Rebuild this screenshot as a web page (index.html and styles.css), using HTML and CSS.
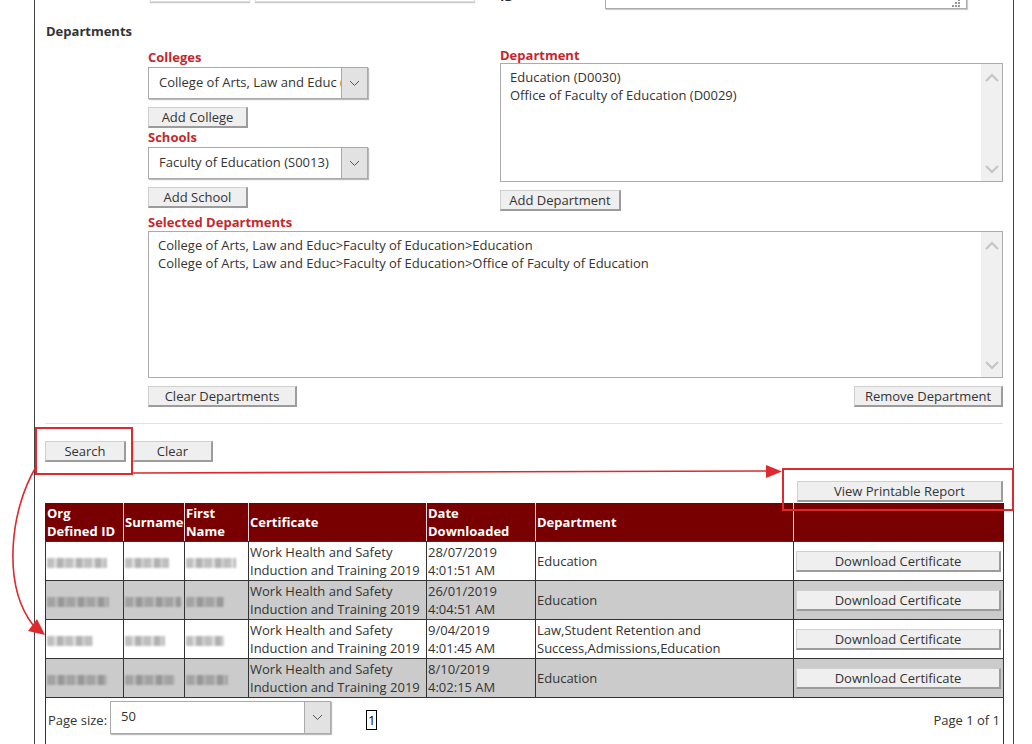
FILE: index.html
```html
<!DOCTYPE html>
<html>
<head>
  <title>Certificate Downloads</title>
  <meta charset="utf-8">
  <link rel="stylesheet" href="styles.css">
</head>
<body>
  <div class="panel">
    <!-- filter row above the departments, scrolled up out of view -->
    <div class="prev-row">
      <span class="stub stub-first"></span>
      <span class="stub stub-last"></span>
      <span class="stub-label">ID</span>
      <span class="stub-area">
        <svg class="grip" width="10" height="8" viewBox="0 0 10 8">
          <rect x="7" y="0" width="2" height="2" fill="#999"/>
          <rect x="4" y="3" width="2" height="2" fill="#999"/>
          <rect x="7" y="3" width="2" height="2" fill="#999"/>
          <rect x="1" y="6" width="2" height="2" fill="#999"/>
          <rect x="4" y="6" width="2" height="2" fill="#999"/>
          <rect x="7" y="6" width="2" height="2" fill="#999"/>
        </svg>
      </span>
    </div>

    <div class="form-label">Departments</div>

    <div class="dept">
      <div class="dept-grid">
        <div class="dept-left">
          <div class="field-label label-colleges">Colleges</div>
          <div class="select">
            <span class="select-value">College of Arts, Law and Educ (C0005)</span>
            <span class="select-arrow">
              <svg width="11" height="7" viewBox="0 0 11 7"><path d="M1 1 L5.5 5.5 L10 1" fill="none" stroke="#555" stroke-width="1"/></svg>
            </span>
          </div>
          <button class="btn btn-add">Add College</button>

          <div class="field-label label-schools">Schools</div>
          <div class="select select-school">
            <span class="select-value">Faculty of Education (S0013)</span>
            <span class="select-arrow">
              <svg width="11" height="7" viewBox="0 0 11 7"><path d="M1 1 L5.5 5.5 L10 1" fill="none" stroke="#555" stroke-width="1"/></svg>
            </span>
          </div>
          <button class="btn btn-add">Add School</button>
        </div>

        <div class="dept-right">
          <div class="field-label">Department</div>
          <div class="listbox listbox-dept">
            <div class="listbox-items">
              <div>Education (D0030)</div>
              <div>Office of Faculty of Education (D0029)</div>
            </div>
            <div class="scrollbar">
              <svg width="14" height="9" viewBox="0 0 14 9"><path d="M1 8 L7 2 L13 8" fill="none" stroke="#c4c4c4" stroke-width="2"/></svg>
              <svg width="14" height="9" viewBox="0 0 14 9"><path d="M1 1 L7 7 L13 1" fill="none" stroke="#c4c4c4" stroke-width="2"/></svg>
            </div>
          </div>
          <button class="btn btn-add-dept">Add Department</button>
        </div>
      </div>

      <div class="field-label label-selected">Selected Departments</div>
      <div class="listbox listbox-selected">
        <div class="listbox-items">
          <div>College of Arts, Law and Educ&gt;Faculty of Education&gt;Education</div>
          <div>College of Arts, Law and Educ&gt;Faculty of Education&gt;Office of Faculty of Education</div>
        </div>
        <div class="scrollbar">
          <svg width="14" height="9" viewBox="0 0 14 9"><path d="M1 8 L7 2 L13 8" fill="none" stroke="#c4c4c4" stroke-width="2"/></svg>
          <svg width="14" height="9" viewBox="0 0 14 9"><path d="M1 1 L7 7 L13 1" fill="none" stroke="#c4c4c4" stroke-width="2"/></svg>
        </div>
      </div>
      <div class="dept-actions">
        <button class="btn btn-wide">Clear Departments</button>
        <button class="btn btn-wide">Remove Department</button>
      </div>
    </div>

    <hr class="divider">

    <div class="search-actions">
      <button class="btn btn-search">Search</button>
      <button class="btn btn-clear">Clear</button>
    </div>

    <div class="report-row">
      <button class="btn btn-report">View Printable Report</button>
    </div>

    <table class="results">
      <colgroup>
        <col class="c-id"><col class="c-surname"><col class="c-first"><col class="c-cert">
        <col class="c-date"><col class="c-dept"><col class="c-action">
      </colgroup>
      <thead>
        <tr>
          <th>Org Defined ID</th>
          <th class="nowrap">Surname</th>
          <th>First Name</th>
          <th>Certificate</th>
          <th>Date Downloaded</th>
          <th>Department</th>
          <th></th>
        </tr>
      </thead>
      <tbody>
        <tr>
          <td><span class="redact w60"></span></td>
          <td><span class="redact w44"></span></td>
          <td><span class="redact w50"></span></td>
          <td>Work Health and Safety Induction and Training 2019</td>
          <td>28/07/2019<br>4:01:51 AM</td>
          <td>Education</td>
          <td><button class="btn btn-download">Download Certificate</button></td>
        </tr>
        <tr class="alt">
          <td><span class="redact w62"></span></td>
          <td><span class="redact w56"></span></td>
          <td><span class="redact w38"></span></td>
          <td>Work Health and Safety Induction and Training 2019</td>
          <td>26/01/2019<br>4:04:51 AM</td>
          <td>Education</td>
          <td><button class="btn btn-download">Download Certificate</button></td>
        </tr>
        <tr>
          <td><span class="redact w46"></span></td>
          <td><span class="redact w40"></span></td>
          <td><span class="redact w38"></span></td>
          <td>Work Health and Safety Induction and Training 2019</td>
          <td>9/04/2019<br>4:01:45 AM</td>
          <td>Law,Student Retention and Success,Admissions,Education</td>
          <td><button class="btn btn-download">Download Certificate</button></td>
        </tr>
        <tr class="alt">
          <td><span class="redact w60"></span></td>
          <td><span class="redact w50"></span></td>
          <td><span class="redact w42"></span></td>
          <td>Work Health and Safety Induction and Training 2019</td>
          <td>8/10/2019<br>4:02:15 AM</td>
          <td>Education</td>
          <td><button class="btn btn-download">Download Certificate</button></td>
        </tr>
      </tbody>
      <tfoot>
        <tr>
          <td colspan="7">
            <div class="pager">
              <span class="pager-label">Page size:</span>
              <div class="select select-size">
                <span class="select-value">50</span>
                <span class="select-arrow">
                  <svg width="11" height="7" viewBox="0 0 11 7"><path d="M1 1 L5.5 5.5 L10 1" fill="none" stroke="#555" stroke-width="1"/></svg>
                </span>
              </div>
              <span class="page-num">1</span>
              <span class="page-count">Page 1 of 1</span>
            </div>
          </td>
        </tr>
      </tfoot>
    </table>
  </div>

  <!-- red callouts drawn over the form -->
  <svg class="callouts" width="1032" height="744" viewBox="0 0 1032 744">
    <rect x="36" y="428" width="96" height="46" fill="none" stroke="#dc2a2e" stroke-width="2"/>
    <rect x="783" y="469" width="230" height="41" fill="none" stroke="#dc2a2e" stroke-width="2"/>
    <path d="M133 473 L768 471" fill="none" stroke="#dc2a2e" stroke-width="1.6"/>
    <polygon points="766,465 782,471.5 766,478" fill="#dc2a2e"/>
    <path d="M36 467 C 10 510, 2 585, 33 625" fill="none" stroke="#dc2a2e" stroke-width="1.6"/>
    <polygon points="28,631 37,619 45,635" fill="#dc2a2e"/>
  </svg>
</body>
</html>
```

FILE: styles.css
```css
body {
  margin: 0;
  font-family: "Open Sans", "Liberation Sans", sans-serif;
  font-size: 13px;
  line-height: 18px;
  color: #333;
  background: #fff;
  position: relative;
  height: 744px;
  overflow: hidden;
}
.panel {
  margin-left: 34px;
  width: 958px;
  padding: 0 10px;
  border-left: 1px solid #444;
  border-right: 1px solid #444;
  min-height: 744px;
}

/* row above, only its bottom edge shows */
.prev-row {
  display: flex;
  align-items: flex-end;
  height: 10px;
}
.stub {
  height: 24px;
  margin-bottom: 8px;
  border: 1px solid #ddd;
  box-shadow: 0 1px 1px #c8c8c8;
  box-sizing: border-box;
}
.stub-first {
  margin-left: 105px;
  width: 100px;
}
.stub-last {
  margin-left: 5px;
  width: 220px;
}
.stub-label {
  margin-left: 25px;
  width: 105px;
  margin-bottom: 5px;
  font-weight: bold;
}
.stub-area {
  position: relative;
  width: 362px;
  height: 40px;
  margin-bottom: 1px;
  border: 1px solid #aaa;
  box-shadow: 1px 1px 1px #ccc;
  box-sizing: border-box;
}
.grip {
  position: absolute;
  right: 5px;
  bottom: 1px;
}

.form-label {
  margin-top: 12px;
  padding-left: 1px;
  font-weight: bold;
}
.field-label {
  color: #c4282c;
  font-weight: bold;
  line-height: 16px;
}

.dept {
  margin-top: 7px;
  padding-left: 103px;
}
.dept-grid {
  display: grid;
  grid-template-columns: 352px 503px;
}
.label-colleges {
  padding-top: 2px;
  line-height: 17px;
}
.label-schools {
  margin-top: 1px;
}
.label-selected {
  margin-top: 3px;
}

.select {
  display: flex;
  width: 220px;
  height: 32px;
  margin-top: 1px;
  border: 1px solid #aaa;
  box-shadow: 1px 1px 1px #bbb;
  box-sizing: border-box;
  background: #fff;
}
.select-school {
  margin-top: 2px;
}
.select-value {
  flex: 1;
  overflow: hidden;
  white-space: nowrap;
  padding-left: 10px;
  line-height: 29px;
}
.select-arrow {
  display: flex;
  align-items: center;
  justify-content: center;
  width: 25px;
  background: #e2e2e2;
  border-left: 1px solid #aaa;
}

.btn {
  display: block;
  box-sizing: border-box;
  height: 21px;
  padding: 0;
  font-family: "Open Sans", "Liberation Sans", sans-serif;
  font-size: 13px;
  line-height: 18px;
  color: #333;
  background: #efefef;
  border: 1px solid #cfcfcf;
  border-right: 2px solid #9c9c9c;
  border-bottom: 2px solid #9c9c9c;
  white-space: nowrap;
}
.btn-add {
  width: 100px;
  margin-top: 8px;
}
.btn-add-dept {
  width: 121px;
  margin-top: 8px;
}
.btn-wide {
  width: 149px;
}
.btn-search {
  width: 81px;
}
.btn-clear {
  width: 80px;
}
.btn-report {
  width: 206px;
}
.btn-download {
  width: 205px;
  margin-left: 1px;
}

.listbox {
  display: flex;
  border: 1px solid #aaa;
  box-sizing: border-box;
  background: #fff;
}
.listbox-dept {
  height: 119px;
}
.listbox-selected {
  margin-top: 1px;
  width: 855px;
  height: 147px;
}
.listbox-items {
  flex: 1;
  padding: 4px 9px;
}
.scrollbar {
  display: flex;
  flex-direction: column;
  justify-content: space-between;
  align-items: center;
  width: 21px;
  padding: 9px 0 7px;
  background: #f0f0f0;
}

.dept-actions {
  display: flex;
  justify-content: space-between;
  margin-top: 8px;
}

.divider {
  margin: 16px 0 0;
  border: 0;
  border-top: 1px solid #e2e2e2;
}

.search-actions {
  display: flex;
  gap: 7px;
  margin-top: 17px;
}
.report-row {
  display: flex;
  justify-content: flex-end;
  margin-top: 19px;
}

.results {
  margin-top: 1px;
  width: 958px;
  table-layout: fixed;
  border-collapse: collapse;
}
.c-id { width: 78px; }
.c-surname { width: 61px; }
.c-first { width: 64px; }
.c-cert { width: 178px; }
.c-date { width: 109px; }
.c-dept { width: 258px; }
.c-action { width: 210px; }

.results th {
  height: 38px;
  padding: 0 1px;
  text-align: left;
  vertical-align: middle;
  color: #fff;
  background: #780000;
  border: 1px solid #e8d8d8;
  border-top: 0;
  border-bottom: 1px solid #333;
}
.results th:first-child {
  border-left-color: #780000;
}
.results th:last-child {
  border-right-color: #780000;
}
.results th.nowrap {
  white-space: nowrap;
}
.results td {
  height: 36px;
  padding: 1px 1px;
  vertical-align: middle;
  border: 1px solid #333;
}
.results tr.alt td {
  background: #cbcbcb;
}

.redact {
  display: inline-block;
  height: 10px;
  vertical-align: middle;
  background: repeating-linear-gradient(90deg, #b4b4b4 0 7px, #dadada 7px 10px, #a4a4a4 10px 16px, #c6c6c6 16px 19px);
  filter: blur(1.3px);
  opacity: 0.85;
}
.alt .redact {
  background: repeating-linear-gradient(90deg, #9c9c9c 0 8px, #b8b8b8 8px 11px, #8e8e8e 11px 17px, #adadad 17px 20px);
}
.w38 { width: 38px; }
.w40 { width: 40px; }
.w42 { width: 42px; }
.w44 { width: 44px; }
.w46 { width: 46px; }
.w50 { width: 50px; }
.w56 { width: 56px; }
.w60 { width: 60px; }
.w62 { width: 62px; }

.results tfoot td {
  height: 60px;
  padding: 3px 3px 0 2px;
  vertical-align: top;
  border-bottom: 0;
}
.pager {
  display: flex;
  align-items: center;
}
.pager-label {
  width: 62px;
  padding-top: 4px;
}
.select-size {
  width: 221px;
  height: 33px;
  margin-top: 0;
}
.page-num {
  margin-left: 35px;
  margin-top: 4px;
  padding: 0 1px;
  border: 1px solid #000;
  line-height: 18px;
  color: #000;
}
.page-count {
  margin-left: auto;
  margin-top: 5px;
  padding-right: 0;
}

.callouts {
  position: absolute;
  top: 0;
  left: 0;
  pointer-events: none;
}
```
